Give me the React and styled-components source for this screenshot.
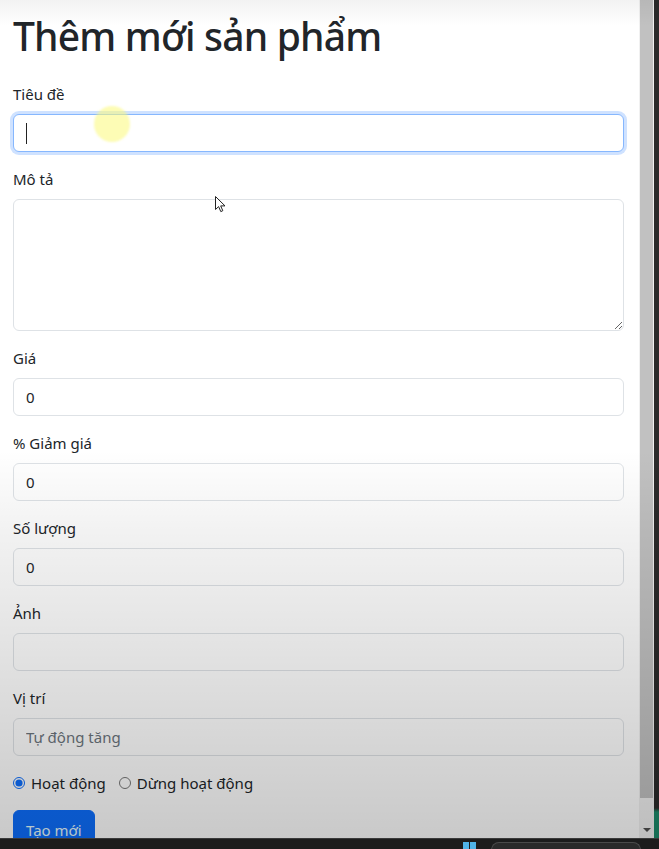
import React from 'react';
import styled, { createGlobalStyle } from 'styled-components';

const GlobalStyle = createGlobalStyle`
    html, body {
        margin: 0;
        padding: 0;
        height: 100%;
        overflow: hidden;
        background: #1c1c1c;
    }
    * {
        box-sizing: border-box;
    }
`;

const Screen = styled.div`
    width: 659px;
    height: 849px;
    display: flex;
    flex-direction: column;
    font-family: 'Noto Sans', 'Open Sans', sans-serif;
    color: #212529;
`;

const Window = styled.div`
    flex: 1;
    display: flex;
    position: relative;
    overflow: hidden;
`;

const Page = styled.div`
    flex: 1;
    background: #fff;
    padding: 12px 15px 0 13px;
    position: relative;
    overflow: hidden;
`;

const Title = styled.h1`
    margin: 0 0 22px;
    font-size: 39px;
    line-height: 48px;
    font-weight: 500;
    letter-spacing: -0.8px;
`;

const Field = styled.div`
    margin-bottom: 15px;
`;

const Label = styled.label`
    display: block;
    margin-bottom: 8px;
    font-size: 15px;
    line-height: 24px;
`;

const Input = styled.input`
    display: block;
    width: 100%;
    height: 38px;
    padding: 6px 12px;
    font: inherit;
    font-size: 15px;
    line-height: 24px;
    color: #212529;
    background: #fff;
    border: 1px solid ${p => (p.$focused ? '#86b7fe' : '#dee2e6')};
    border-radius: 6px;
    box-shadow: ${p => (p.$focused ? '0 0 0 3px rgba(13, 110, 253, 0.2)' : 'none')};
    outline: none;
    &::placeholder {
        color: #6c757d;
    }
`;

const TextArea = styled.textarea`
    display: block;
    width: 100%;
    height: 132px;
    padding: 6px 12px;
    font: inherit;
    font-size: 15px;
    border: 1px solid #dee2e6;
    border-radius: 6px;
    resize: vertical;
    outline: none;
`;

const InputWrap = styled.div`
    position: relative;
`;

const Caret = styled.span`
    position: absolute;
    left: 13px;
    top: 9px;
    width: 1px;
    height: 21px;
    background: #222;
`;

const RadioRow = styled.div`
    display: flex;
    align-items: center;
    gap: 13px;
    height: 24px;
    margin-bottom: 15px;
`;

const RadioLabel = styled.label`
    display: flex;
    align-items: center;
    gap: 6px;
    font-size: 15px;
    line-height: 24px;
`;

const Radio = styled.input`
    margin: 0;
    width: 12px;
    height: 12px;
    accent-color: #0d6efd;
`;

const Button = styled.button`
    font: inherit;
    font-size: 15px;
    line-height: 24px;
    padding: 7px 12px;
    color: #e6fbff;
    background: #0d6efd;
    border: 1px solid #0d6efd;
    border-radius: 6px;
`;

const Highlight = styled.div`
    position: absolute;
    left: 94px;
    top: 106px;
    width: 36px;
    height: 36px;
    border-radius: 50%;
    background: rgba(252, 250, 120, 0.55);
    filter: blur(1px);
    pointer-events: none;
`;

const Pointer = styled.svg`
    position: absolute;
    left: 215px;
    top: 196px;
    pointer-events: none;
`;

const Scrollbar = styled.div`
    width: 15px;
    background: #f1f1f1;
    display: flex;
    flex-direction: column;
    padding: 0 1px;
`;

const Thumb = styled.div`
    height: 798px;
    background: #c1c1c1;
`;

const ArrowBox = styled.div`
    flex: 1;
    display: flex;
    align-items: flex-end;
    justify-content: center;
    padding-bottom: 6px;
    &::after {
        content: '';
        border-left: 4px solid transparent;
        border-right: 4px solid transparent;
        border-top: 4px solid #505050;
    }
`;

const Frame = styled.div`
    width: 5px;
    background: linear-gradient(to bottom, #2b2b2b 0, #2b2b2b 808px, #1d8a6a 812px, #1d8a6a 100%);
`;

const Shade = styled.div`
    position: absolute;
    inset: 0;
    pointer-events: none;
    background: linear-gradient(
        to bottom,
        rgba(0, 0, 0, 0.05) 0,
        rgba(0, 0, 0, 0) 26px,
        rgba(0, 0, 0, 0) 450px,
        rgba(0, 0, 0, 0.05) 530px,
        rgba(0, 0, 0, 0.1) 630px,
        rgba(0, 0, 0, 0.16) 740px,
        rgba(0, 0, 0, 0.21) 838px
    );
`;

const Taskbar = styled.div`
    height: 11px;
    background: #1c1c1c;
    border-top: 1px solid #3a3a3a;
    display: flex;
    align-items: flex-start;
    padding-top: 3px;
`;

const TaskIcon = styled.div`
    margin-left: 463px;
    width: 13px;
    height: 8px;
    background: linear-gradient(to right, #4fb3e8 0 45%, transparent 45% 55%, #4fb3e8 55%);
`;

const SearchBox = styled.div`
    margin-left: 15px;
    width: 150px;
    height: 12px;
    border: 1px solid #4a4a4a;
    border-bottom: none;
    border-radius: 8px 8px 0 0;
    background: #2a2a2a;
`;

const fields = [
    { label: 'Giá', value: '0' },
    { label: '% Giảm giá', value: '0' },
    { label: 'Số lượng', value: '0' },
    { label: 'Ảnh', value: '' },
    { label: 'Vị trí', value: '', placeholder: 'Tự động tăng' },
];

const App = () => {
    return (
        <Screen>
            <GlobalStyle />
            <Window>
                <Page>
                    <Title>Thêm mới sản phẩm</Title>
                    <Field>
                        <Label>Tiêu đề</Label>
                        <InputWrap>
                            <Input $focused type="text" defaultValue="" />
                            <Caret />
                        </InputWrap>
                    </Field>
                    <Field>
                        <Label>Mô tả</Label>
                        <TextArea rows={5} />
                    </Field>
                    {fields.map((f, index) => (
                        <Field key={index}>
                            <Label>{f.label}</Label>
                            <Input type="text" defaultValue={f.value} placeholder={f.placeholder} />
                        </Field>
                    ))}
                    <RadioRow>
                        <RadioLabel>
                            <Radio type="radio" name="status" defaultChecked />
                            Hoạt động
                        </RadioLabel>
                        <RadioLabel>
                            <Radio type="radio" name="status" />
                            Dừng hoạt động
                        </RadioLabel>
                    </RadioRow>
                    <Button type="button">Tạo mới</Button>
                    <Highlight />
                    <Pointer width="12" height="17" viewBox="0 0 12 17">
                        <path d="M0.5 0.5 L0.5 13.5 L3.6 10.6 L5.8 15.6 L7.8 14.7 L5.7 9.9 L10 9.9 Z" fill="#fff" stroke="#222" strokeWidth="1" strokeLinejoin="round" />
                    </Pointer>
                </Page>
                <Scrollbar>
                    <Thumb />
                    <ArrowBox />
                </Scrollbar>
                <Frame />
                <Shade />
            </Window>
            <Taskbar>
                <TaskIcon />
                <SearchBox />
            </Taskbar>
        </Screen>
    );
};

export default App;
